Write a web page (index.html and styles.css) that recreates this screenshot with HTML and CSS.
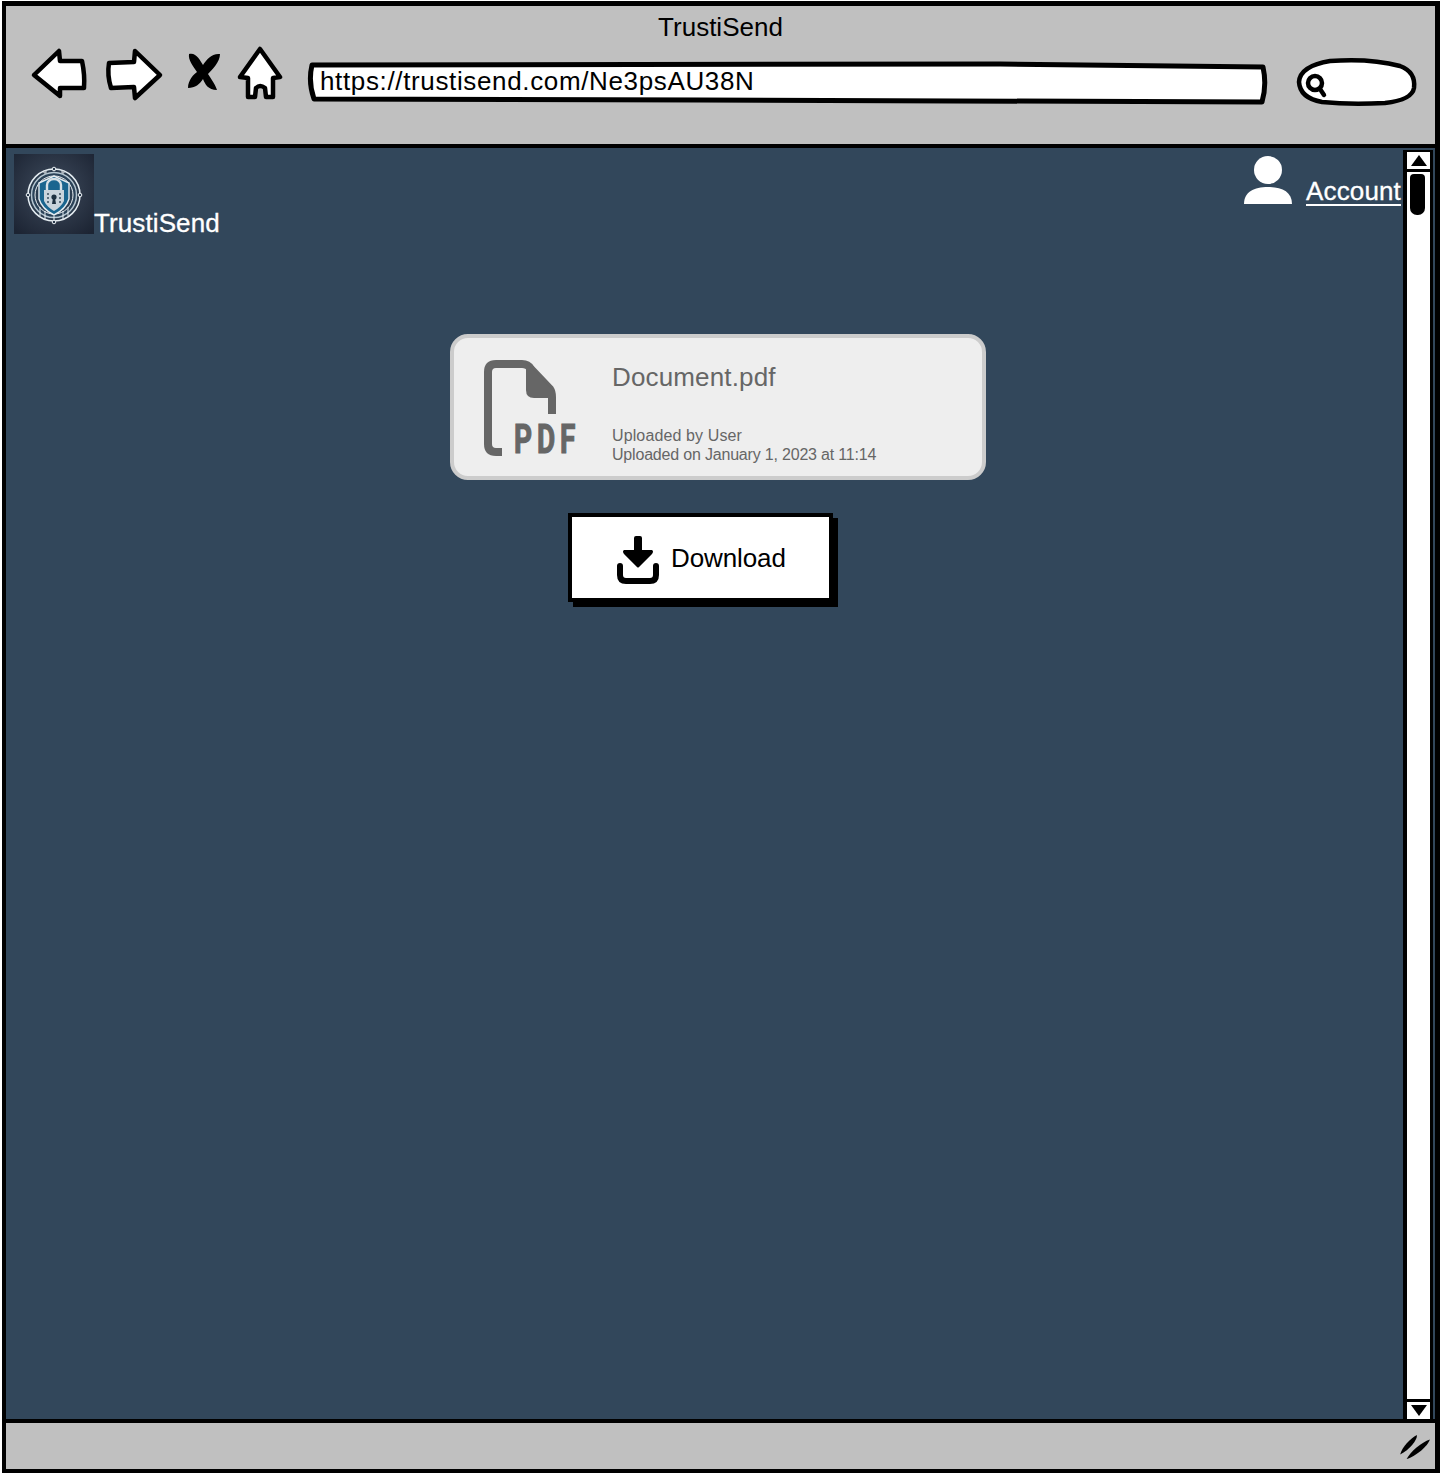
FILE: index.html
```html
<!DOCTYPE html>
<html lang="en">
<head>
<meta charset="utf-8">
<title>TrustiSend</title>
<link rel="stylesheet" href="styles.css">
</head>
<body>
<div class="window">
  <header class="toolbar">
    <div class="window-title">TrustiSend</div>
    <div class="nav-row">
      <svg class="nav-icon back" viewBox="30 46 60 60"><path class="sketch" d="M34 75 L59 51 L60 61 L82 61 Q85 75 84 88 L60 88 L60 96 Z"/></svg>
      <svg class="nav-icon forward" viewBox="104 46 60 60"><path class="sketch" d="M109 63 L134 62 L135 51 L160 75 L135 98 L134 87 L111 88 Q107 75 109 63 Z"/></svg>
      <svg class="nav-icon stop" viewBox="186 46 36 60"><path class="solid" d="M189 54 C196 52 200 60 203 65 C206 60 212 53 220 54 C220 62 212 70 208 74 C212 80 216 86 217 90 C208 90 205 84 203 79 C200 84 195 88 188 88 C188 80 194 74 197 72 C193 66 188 60 189 54 Z"/></svg>
      <svg class="nav-icon home" viewBox="236 46 50 60"><path class="sketch" d="M260 49 L280 77 L273 78 L273 97 L266 97 L265 88 Q260 84 256 88 L255 97 L248 97 L248 78 L240 77 Z"/></svg>
      <div class="url-box">
        <svg class="url-shape" viewBox="306 46 966 60"><path class="sketch thick" d="M312 65 L1000 64 L1263 67 Q1267 85 1262 102 L700 100 L314 99 Q308 82 312 65 Z"/></svg>
        <span class="url-text">https://trustisend.com/Ne3psAU38N</span>
      </div>
      <svg class="search-box" viewBox="1296 46 122 62"><path class="sketch" d="M1330 61 Q1370 58 1400 66 Q1416 72 1414 88 Q1412 100 1385 103 Q1350 105 1322 102 Q1300 98 1299 82 Q1300 66 1330 61 Z"/><circle class="lens" cx="1315" cy="83" r="7"/><path class="lens" d="M1320 89 L1324 95"/></svg>
    </div>
  </header>

  <main class="viewport">
    <div class="page">
      <div class="site-header">
        <div class="brand">
          <svg class="logo" viewBox="0 0 80 80">
            <defs>
              <radialGradient id="logoBg" cx="50%" cy="45%" r="70%"><stop offset="0" stop-color="#3f4c5e"/><stop offset="1" stop-color="#1c2433"/></radialGradient>
            </defs>
            <rect width="80" height="80" fill="url(#logoBg)"/>
            <circle cx="40" cy="41" r="26" fill="#2a3a4c" stroke="#e4ecf1" stroke-width="1.5"/>
            <circle cx="40" cy="41" r="22.5" fill="#2a4258" stroke="#b5c6d1" stroke-width="1.5"/>
            <circle cx="40" cy="41" r="19" fill="#2b3d50" stroke="#eef3f6" stroke-width="1"/>
            <path d="M25 29 L40 22 L55 29 L55 45 Q52 55 40 61 Q28 55 25 45 Z" fill="#1a658f" stroke="#e4ecf1" stroke-width="1.4"/>
            <path d="M30 36 L50 36 L50 47 Q47 53 40 57 Q33 53 30 47 Z" fill="#c9d4dc"/>
            <path d="M33 36 V31 a7 6 0 0 1 14 0 V36" fill="none" stroke="#d6e0e6" stroke-width="2.4"/>
            <circle cx="40" cy="43" r="2.6" fill="#1d3040"/>
            <path d="M39 44 h2 l1 6 h-4 z" fill="#1d3040"/>
            <path d="M33 40 h2 M33 44 h2 M33 48 h2 M45 40 h2 M45 44 h2 M45 48 h2" stroke="#3a4d5e" stroke-width="1.5"/>
            <path d="M26 62 V53 M31 65 V57 M49 65 V57 M54 62 V53 M40 68 V62" stroke="#e4ecf1" stroke-width="1"/>
            <g fill="#2a3a4c" stroke="#eef3f6" stroke-width="1"><circle cx="14" cy="41" r="1.8"/><circle cx="66" cy="41" r="1.8"/><circle cx="40" cy="15" r="1.8"/><circle cx="40" cy="68" r="1.8"/><circle cx="31" cy="18" r="1.2"/><circle cx="49" cy="18" r="1.2"/></g>
          </svg>
          <span class="brand-name">TrustiSend</span>
        </div>
        <div class="account">
          <svg class="account-icon" viewBox="0 0 48 48"><circle cx="24" cy="14" r="14"/><path d="M0 48 C0 36 10 31 24 31 C38 31 48 36 48 48 Z"/></svg>
          <a class="account-link" href="#">Account</a>
        </div>
      </div>

      <section class="file-card">
        <svg class="pdf-icon" viewBox="0 0 96 100">
          <path class="pdf-outline" d="M18 96 H12 Q4 96 4 88 V16 Q4 8 12 8 H38 Q44 8 47 13 L66 33 Q68 36 68 41 V58"/>
          <path class="pdf-fold" d="M42 6 L70 36 L70 42 H50 Q42 42 42 34 Z"/>
          <text class="pdf-label" transform="translate(30 97) scale(.7 1)" x="0" y="0">PDF</text>
        </svg>
        <div class="file-info">
          <div class="file-name">Document.pdf</div>
          <div class="file-meta">
            <div class="meta-by">Uploaded by User</div>
            <div class="meta-on">Uploaded on January 1, 2023 at 11:14</div>
          </div>
        </div>
      </section>

      <button class="download-btn" type="button">
        <svg class="download-icon" viewBox="0 0 42 48">
          <path d="M17 2 Q17 0 19 0 H23 Q25 0 25 2 V14 H35 Q37 15 35 18 L22 31 Q21 32 20 31 L7 18 Q5 15 7 14 H17 Z"/>
          <path class="tray" d="M3 30 V39 Q3 45 9 45 H33 Q39 45 39 39 V30"/>
        </svg>
        <span class="download-label">Download</span>
      </button>
    </div>

    <aside class="scrollbar">
      <div class="scroll-btn"><span class="arrow-up"></span></div>
      <div class="scroll-track"><div class="scroll-thumb"></div></div>
      <div class="scroll-btn bottom"><span class="arrow-down"></span></div>
    </aside>
  </main>

  <footer class="statusbar">
    <svg class="grip" viewBox="0 0 34 28"><path d="M1 22 C3 14 12 5 19 1 C20 6 11 17 1 22 Z"/><path d="M8 27 C12 19 24 9 33 6 C31 13 18 24 8 27 Z"/></svg>
  </footer>
</div>
</body>
</html>
```
FILE: styles.css
```css
* { box-sizing: border-box; }
html, body { margin: 0; padding: 0; background: #fff; }
body { font-family: "Liberation Sans", Arial, sans-serif; color: #000; }

.window {
  width: 1438px;
  height: 1472px;
  margin: 1px 2px 0;
  border: solid #000;
  border-width: 5px 5px 4px 4px;
  display: flex;
  flex-direction: column;
}

.toolbar {
  height: 142px;
  flex: none;
  background: #c0c0c0;
  border-bottom: 4px solid #000;
}
.window-title {
  height: 40px;
  font-size: 26px;
  line-height: 42px;
  text-align: center;
}
.nav-row {
  display: flex;
  align-items: flex-start;
  padding-left: 24px;
}
.nav-icon, .search-box, .url-shape { display: block; overflow: visible; }
.nav-icon { height: 60px; flex: none; }
.back { width: 60px; }
.forward { width: 60px; margin-left: 14px; }
.stop { width: 36px; margin-left: 22px; }
.home { width: 50px; margin-left: 14px; }
.sketch { fill: #fff; stroke: #000; stroke-width: 4.5; stroke-linejoin: round; }
.sketch.thick { stroke-width: 5; }
.solid { fill: #000; }
.lens { fill: none; stroke: #000; stroke-width: 4.5; stroke-linecap: round; }

.url-box {
  position: relative;
  width: 966px;
  height: 60px;
  margin-left: 20px;
  display: flex;
  align-items: center;
  padding: 10px 0 0 14px;
  flex: none;
}
.url-shape { position: absolute; inset: 0; width: 966px; height: 60px; }
.url-text { position: relative; font-size: 26px; line-height: 30px; letter-spacing: .64px; }
.search-box { width: 122px; height: 62px; margin-left: 24px; flex: none; }

.viewport {
  flex: 1;
  min-height: 0;
  display: flex;
  background: #32475b;
}
.page { flex: 1; min-width: 0; padding: 6px 0 0 8px; }

.site-header {
  display: flex;
  justify-content: space-between;
  align-items: flex-start;
  height: 80px;
}
.brand { display: flex; align-items: flex-end; }
.logo { display: block; width: 80px; height: 80px; }
.brand-name { color: #fff; font-size: 26px; line-height: 30px; margin-bottom: -4px; letter-spacing: .1px; -webkit-text-stroke: .3px #fff; }

.account { display: flex; align-items: flex-start; }
.account-icon { display: block; width: 48px; height: 48px; margin-top: 2px; fill: #fff; }
.account-link {
  color: #fff;
  font-size: 26px;
  line-height: 26px;
  margin: 24px 2px 0 14px;
  letter-spacing: .15px;
  -webkit-text-stroke: .3px #fff;
  text-decoration: none;
  border-bottom: 2px solid #fff;
}

.file-card {
  width: 536px;
  height: 146px;
  margin: 100px 0 0 436px;
  padding: 18px 30px 12px;
  background: #eee;
  border: 4px solid #ccc;
  border-radius: 18px;
  display: flex;
  color: #666;
}
.pdf-icon { display: block; width: 96px; height: 100px; flex: none; overflow: visible; }
.pdf-outline { fill: none; stroke: #666; stroke-width: 8; }
.pdf-fold { fill: #666; }
.pdf-label { fill: #666; stroke: #666; stroke-width: 1.2; font-family: "Roboto", sans-serif; font-weight: 700; font-size: 40px; letter-spacing: 7px; }
.file-info {
  flex: 1;
  margin-left: 32px;
  display: flex;
  flex-direction: column;
  justify-content: space-between;
}
.file-name { font-size: 26px; line-height: 30px; margin-top: 6px; letter-spacing: .15px; }
.file-meta { font-size: 16px; line-height: 19px; }
.meta-by { letter-spacing: .12px; }
.meta-on { letter-spacing: -.19px; }

.download-btn {
  display: flex;
  align-items: center;
  width: 265px;
  height: 89px;
  margin: 33px 0 0 554px;
  padding: 0 0 0 45px;
  background: #fff;
  border: 4px solid #000;
  box-shadow: 5px 5px 0 #000;
  font: inherit;
  font-size: 26px;
  color: #000;
}
.download-icon { display: block; width: 42px; height: 48px; margin: 4px 12px 0 0; flex: none; fill: #000; overflow: visible; }
.download-label { padding-top: 2px; letter-spacing: -.1px; }
.tray { fill: none; stroke: #000; stroke-width: 6; stroke-linecap: round; }

.scrollbar {
  width: 30px;
  flex: none;
  margin: 2px 2px 0 0;
  background: #000;
  display: flex;
  flex-direction: column;
  padding: 0 3px 0 4px;
}
.scroll-btn {
  height: 22px;
  flex: none;
  background: #fff;
  border-bottom: 3px solid #000;
  border-top: 2px solid #000;
  display: flex;
  align-items: center;
  justify-content: center;
}
.scroll-btn.bottom { height: 20px; border-bottom: 0; border-top: 3px solid #000; }
.arrow-up { width: 0; height: 0; border: solid transparent; border-width: 0 8px 11px; border-bottom-color: #000; }
.arrow-down { width: 0; height: 0; border: solid transparent; border-width: 11px 8px 0; border-top-color: #000; }
.scroll-track { flex: 1; background: #fff; padding: 2px 0 0 3px; }
.scroll-thumb { width: 15px; height: 41px; background: #000; border-radius: 4px 4px 7px 7px; }

.statusbar {
  height: 50px;
  flex: none;
  background: #c0c0c0;
  border-top: 4px solid #000;
  display: flex;
  justify-content: flex-end;
  align-items: center;
  padding-right: 4px;
}
.grip { display: block; width: 32px; height: 26px; margin-top: 2px; fill: #000; }
```
